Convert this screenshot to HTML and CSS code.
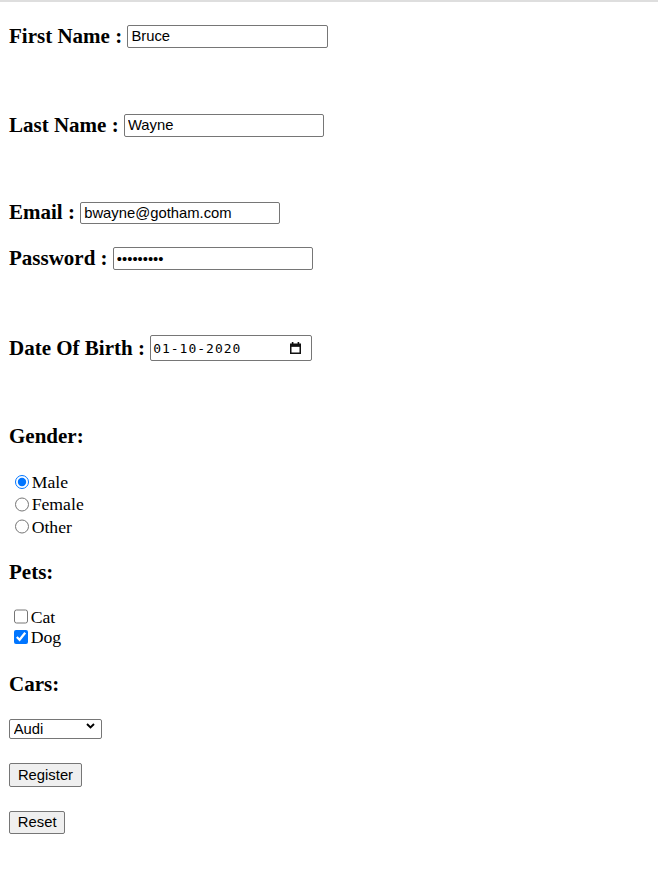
FILE: index.html
```html
<!DOCTYPE html>
<html lang="en">
<head>
<meta charset="utf-8">
<title>Registration</title>
<link rel="stylesheet" href="styles.css">
</head>
<body>
<div class="topbar"></div>
<form class="form">
  <h3 class="row r1">First Name : <input class="txt w201" type="text" value="Bruce"></h3>
  <h3 class="row r2">Last Name : <input class="txt" type="text" value="Wayne"></h3>
  <h3 class="row r3">Email : <input class="txt" type="email" value="bwayne@gotham.com"></h3>
  <h3 class="row r4">Password : <input class="txt" type="password" value="123456789"></h3>
  <h3 class="row r5">Date Of Birth : <span class="date"><span class="date-text">01-10-2020</span><svg class="cal" width="11" height="12" viewBox="0 0 11 12"><rect x="1.8" y="0" width="1.6" height="3" fill="#111"/><rect x="7.6" y="0" width="1.6" height="3" fill="#111"/><rect x="0.75" y="2.25" width="9.5" height="9" fill="none" stroke="#111" stroke-width="1.5"/><rect x="0.75" y="2.25" width="9.5" height="2.6" fill="#111"/></svg></span></h3>

  <h3 class="row r6">Gender:</h3>
  <div class="group g-radio">
    <label class="opt radio-opt"><input class="radio" type="radio" name="gender" checked>Male</label>
    <label class="opt radio-opt"><input class="radio" type="radio" name="gender">Female</label>
    <label class="opt radio-opt"><input class="radio" type="radio" name="gender">Other</label>
  </div>

  <h3 class="row r7">Pets:</h3>
  <div class="group g-check">
    <label class="opt check-opt"><input class="check" type="checkbox">Cat</label>
    <label class="opt check-opt"><input class="check" type="checkbox" checked>Dog</label>
  </div>

  <h3 class="row r8">Cars:</h3>
  <div class="select-wrap">
    <select class="select">
      <option>Audi</option>
      <option>BMW</option>
      <option>Mercedes</option>
      <option>Volvo</option>
    </select>
    <svg class="chev" width="9" height="6" viewBox="0 0 9 6"><path d="M1 1 L4.5 4.5 L8 1" fill="none" stroke="#000" stroke-width="1.9"/></svg>
  </div>
  <div class="btn-line b1"><button class="btn btn-reg" type="button">Register</button></div>
  <div class="btn-line b2"><button class="btn btn-reset" type="reset">Reset</button></div>
</form>
</body>
</html>
```

FILE: styles.css
```css
html, body {
  margin: 0;
  padding: 0;
  background: #ffffff;
}

body {
  font-family: "Liberation Serif", "Times New Roman", serif;
  font-size: 17.7px;
  color: #000;
}

.topbar {
  height: 2px;
  background: #dedede;
}

.form {
  padding: 0 9px 40px 9px;
}

.row {
  margin: 0;
  height: 24px;
  line-height: 24px;
  font-size: 21px;
  font-weight: bold;
  white-space: nowrap;
}

.r1 { margin-top: 21.75px; }
.r2 { margin-top: 65px; }
.r3 { margin-top: 63.6px; }
.r4 { margin-top: 21.7px; }
.r5 { margin-top: 65.3px; }
.r6 { margin-top: 65px; }
.r7 { margin-top: 22.2px; }
.r8 { margin-top: 24.15px; }

.txt {
  box-sizing: border-box;
  width: 200px;
  height: 22.5px;
  padding: 0 3px;
  border: 1px solid #767676;
  border-radius: 2px;
  font-family: "Liberation Sans", Arial, sans-serif;
  font-size: 14.8px;
  font-weight: normal;
  color: #000;
  background: #fff;
  vertical-align: 1.5px;
  outline: none;
}

.w201 { width: 201px; }

.date {
  box-sizing: border-box;
  display: inline-flex;
  align-items: center;
  justify-content: space-between;
  width: 161.7px;
  height: 26px;
  padding: 0 10px 0 2px;
  border: 1px solid #767676;
  border-radius: 2px;
  vertical-align: 2.5px;
  line-height: normal;
}

.date-text {
  font-family: "DejaVu Sans Mono", "Liberation Mono", monospace;
  font-size: 13px;
  letter-spacing: 1px;
  font-weight: normal;
  color: #000;
}

.cal {
  display: block;
}

.group {
  display: flex;
  flex-direction: column;
}

.g-radio { margin-top: 22.85px; }
.g-check { margin-top: 22.4px; }

.opt {
  display: flex;
  align-items: center;
  line-height: 20px;
}

.radio-opt { height: 22.2px; }
.check-opt { height: 20.6px; }

.radio {
  width: 14.3px;
  height: 14.3px;
  margin: 0 2.7px 0 5.7px;
  accent-color: #0075ff;
}

.check {
  width: 14.3px;
  height: 14.3px;
  margin: 0 2.7px 0 4.7px;
  accent-color: #0075ff;
}

.select-wrap {
  position: relative;
  width: 93.4px;
  height: 20px;
  margin-top: 23.25px;
}

.select {
  box-sizing: border-box;
  appearance: none;
  -webkit-appearance: none;
  display: block;
  width: 93.4px;
  height: 20px;
  margin: 0;
  padding: 0 0 0 3.7px;
  border: 1px solid #767676;
  border-radius: 2px;
  background: #fff;
  font-family: "Liberation Sans", Arial, sans-serif;
  font-size: 14.8px;
  color: #000;
}

.chev {
  position: absolute;
  left: 76.5px;
  top: 4.6px;
  pointer-events: none;
}

.btn-line {
  height: 23.4px;
}

.b1 { margin-top: 24.3px; }
.b2 { margin-top: 24px; }

.btn {
  box-sizing: border-box;
  height: 23.4px;
  margin: 0;
  padding: 0;
  border: 1px solid #767676;
  border-radius: 2px;
  background: #efefef;
  font-family: "Liberation Sans", Arial, sans-serif;
  font-size: 14.8px;
  color: #000;
  text-align: center;
}

.btn-reg { width: 73px; }
.btn-reset { width: 56.4px; }
```
